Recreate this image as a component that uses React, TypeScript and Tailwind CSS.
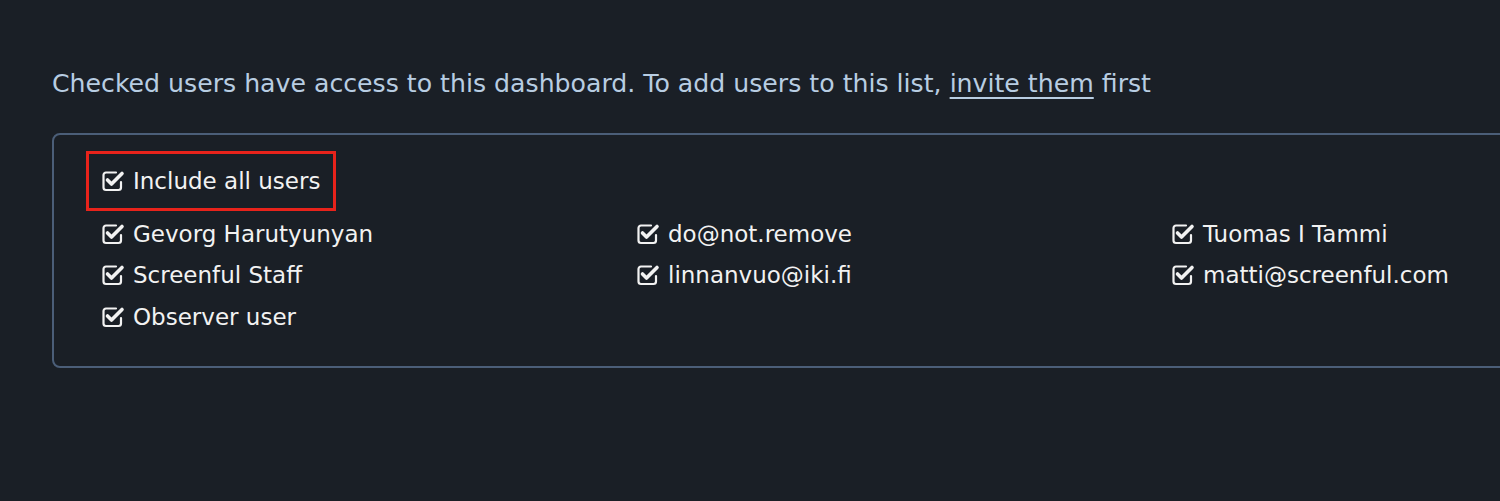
import React from "react";

function CheckIcon() {
  return (
    <svg width="24" height="22" viewBox="0 0 24 22" fill="none" className="shrink-0">
      <path
        d="M15 2.5H5A2.5 2.5 0 0 0 2.5 5V17.5A2.5 2.5 0 0 0 5 20H17.5A2.5 2.5 0 0 0 20 17.5V12"
        stroke="#f2f2f2"
        strokeWidth="2.2"
        strokeLinecap="round"
      />
      <path
        d="M6.5 10L10.5 14L21 3.5"
        stroke="#f2f2f2"
        strokeWidth="3.6"
        strokeLinecap="round"
        strokeLinejoin="round"
      />
    </svg>
  );
}

function Item({ label }: { label: string }) {
  return (
    <div className="flex items-center gap-[8px] h-[41.5px]">
      <CheckIcon />
      <span>{label}</span>
    </div>
  );
}

export default function App() {
  const users = [
    "Gevorg Harutyunyan",
    "do@not.remove",
    "Tuomas I Tammi",
    "Screenful Staff",
    "linnanvuo@iki.fi",
    "matti@screenful.com",
    "Observer user",
  ];
  return (
    <div
      className="w-[1500px] h-[501px] overflow-hidden bg-[#1a1f26] pl-[52px] pt-[68px]"
      style={{ fontFamily: '"DejaVu Sans", Verdana, sans-serif' }}
    >
      <p className="text-[25.2px] leading-[32px] text-[#b8cde2] whitespace-nowrap">
        Checked users have access to this dashboard. To add users to this list,{" "}
        <a href="#" className="underline underline-offset-[5px] decoration-[2px]">
          invite them
        </a>{" "}
        first
      </p>
      <div className="mt-[33px] w-[1600px] h-[235px] border-2 border-[#4b5e78] rounded-[8px] pl-[32px] pt-[16px] text-[23px] text-[#f2f2f2]">
        <div className="inline-flex border-[3px] border-[#e8231b] pl-[12px] pr-[13px] py-[6px]">
          <div className="flex items-center gap-[8px] h-[42px]">
            <CheckIcon />
            <span>Include all users</span>
          </div>
        </div>
        <div className="grid grid-cols-[535px_535px_535px] ml-[15px] mt-[2px]">
          {users.map((u) => (
            <Item key={u} label={u} />
          ))}
        </div>
      </div>
    </div>
  );
}
